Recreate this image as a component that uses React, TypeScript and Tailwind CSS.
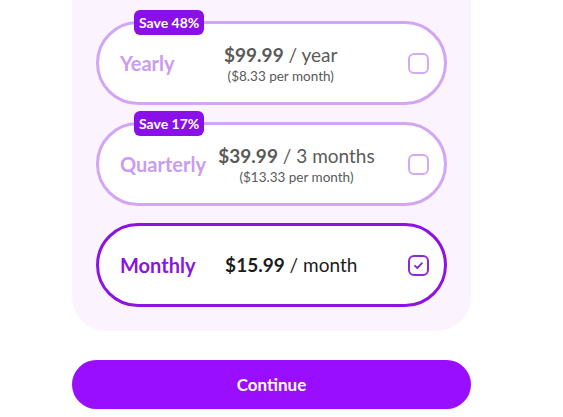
import React from "react";

type Plan = {
  name: string;
  price: string;
  unit: string;
  sub?: string;
  badge?: string;
  selected?: boolean;
};

const plans: Plan[] = [
  { name: "Yearly", price: "$99.99", unit: "/ year", sub: "($8.33 per month)", badge: "Save 48%" },
  { name: "Quarterly", price: "$39.99", unit: "/ 3 months", sub: "($13.33 per month)", badge: "Save 17%" },
  { name: "Monthly", price: "$15.99", unit: "/ month", selected: true },
];

function Card({ p }: { p: Plan }) {
  return (
    <div
      className={
        "relative flex h-[84px] items-center rounded-full border-[3px] bg-white pl-[21px] pr-[15px] " +
        (p.selected ? "border-[#8c12e6]" : "border-[#d2a6f4]")
      }
    >
      {p.badge && (
        <div className="absolute -top-[14px] left-[35px] flex h-[25px] items-center rounded-[6px] bg-[#8a0fe8] px-[5px] text-[14px] font-bold leading-none text-white">
          {p.badge}
        </div>
      )}
      <div
        className={
          "text-[20px] font-bold leading-none " +
          (p.selected ? "text-[#8a14e0]" : "text-[#c99cf0]")
        }
      >
        {p.name}
      </div>
      <div className="mr-[21px] flex flex-1 flex-col items-center">
        <div className={"text-[19px] leading-[24px] " + (p.selected ? "text-[#1c1c1c]" : "text-[#5a5a5a]")}>
          <span className="font-bold">{p.price}</span>
          <span className="font-normal"> {p.unit}</span>
        </div>
        {p.sub && <div className="mt-[1px] text-[13.5px] leading-[16px] text-[#5a5a5a]">{p.sub}</div>}
      </div>
      <div
        className={
          "flex h-[21px] w-[21px] items-center justify-center rounded-[6px] border-2 " +
          (p.selected ? "border-[#8c2bd6]" : "border-[#d4aaf2]")
        }
      >
        {p.selected && (
          <svg width="11" height="9" viewBox="0 0 11 9" fill="none">
            <path d="M2 4.8 L4.3 7 L9 2.2" stroke="#7d2cc4" strokeWidth="1.8" strokeLinecap="round" strokeLinejoin="round" />
          </svg>
        )}
      </div>
    </div>
  );
}

export default function App() {
  return (
    <div
      className="h-[417px] w-[563px] overflow-hidden bg-white"
      style={{ fontFamily: "Lato, 'Noto Sans', sans-serif" }}
    >
      <div className="ml-[72px] flex w-[399px] flex-col gap-[17px] rounded-b-[34px] bg-[#fbf4ff] px-[24px] pb-[24px] pt-[21px]">
        {plans.map((p) => (
          <Card key={p.name} p={p} />
        ))}
      </div>
      <button className="ml-[72px] mt-[29px] flex h-[49px] w-[399px] items-center justify-center rounded-full bg-[#9a0eff] text-[17px] font-bold text-white">
        Continue
      </button>
    </div>
  );
}
